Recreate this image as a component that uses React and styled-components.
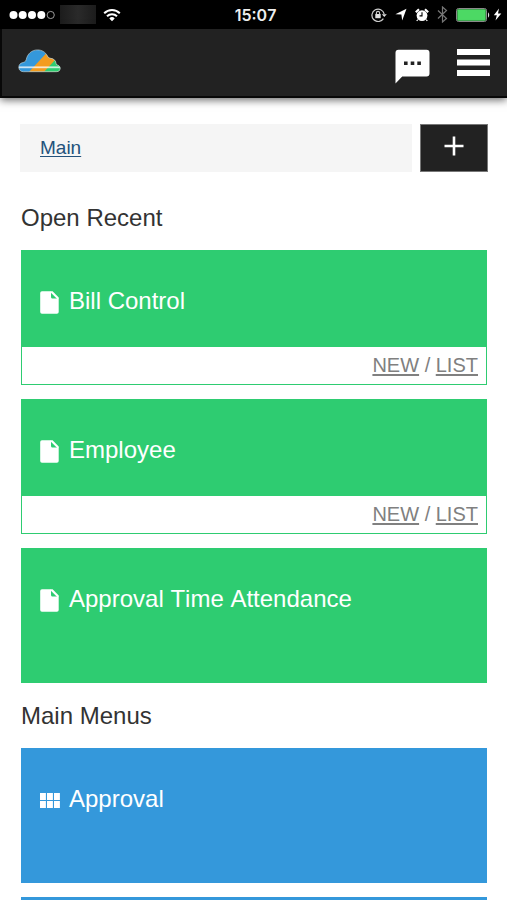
import React from 'react';
import styled, { createGlobalStyle } from 'styled-components';

const GlobalStyle = createGlobalStyle`
  * {
    box-sizing: border-box;
  }
  body {
    margin: 0;
    background: #ffffff;
    font-family: 'Liberation Sans', Arial, sans-serif;
    font-kerning: none;
  }
  svg {
    display: block;
    flex-shrink: 0;
  }
`;

const Screen = styled.div`
  height: 100vh;
  display: flex;
  flex-direction: column;
  overflow: hidden;
`;

const StatusBar = styled.div`
  flex-shrink: 0;
  display: grid;
  grid-template-columns: 1fr auto 1fr;
  align-items: center;
  height: 29px;
  padding: 0 5px 0 9px;
  background: #000000;
`;

const StatusGroup = styled.div`
  display: flex;
  align-items: center;
  justify-content: ${props => props.$end ? 'flex-end' : 'flex-start'};
  gap: ${props => props.$end ? '8px' : '5px'};
`;

const Power = styled.div`
  display: flex;
  align-items: center;
  gap: 3px;
`;

const Carrier = styled.div`
  width: 36px;
  height: 19px;
  margin-right: 2px;
  background: linear-gradient(to right, #1c1c1c, #2a2a2a 50%, #1c1c1c);
`;

const Clock = styled.time`
  font-family: Inter, sans-serif;
  font-size: 16px;
  font-weight: 600;
  line-height: 20px;
  color: #eeeeee;
`;

const Header = styled.header`
  flex-shrink: 0;
  display: flex;
  align-items: flex-start;
  justify-content: space-between;
  height: 69px;
  padding: 20px 17px 0 16px;
  background: #222222;
  border-left: 2px solid #080808;
  border-bottom: 2px solid #080808;
  box-shadow: 0 2px 8px rgba(0, 0, 0, 0.6);
`;

const HeaderActions = styled.div`
  display: flex;
  align-items: flex-start;
  gap: 27px;
`;

const IconButton = styled.button`
  padding: 0;
  border: none;
  background: none;
  cursor: pointer;
`;

const HomeLink = styled.a`
  display: block;
`;

const Content = styled.main`
  flex: 1;
  min-height: 0;
  overflow: hidden;
  padding: 26px 20px 0;
`;

const Toolbar = styled.div`
  display: flex;
  gap: 8px;
  margin-right: -1px;
`;

const Breadcrumb = styled.nav`
  flex: 1;
  height: 48px;
  padding: 0 20px;
  background: #f5f5f5;
  font-size: 19px;
  line-height: 48px;

  a {
    color: #23527c;
    text-underline-offset: 2px;
  }
`;

const AddButton = styled.button`
  display: flex;
  align-items: center;
  justify-content: center;
  width: 68px;
  height: 48px;
  padding: 0 0 4px;
  background: #222222;
  border: 1px solid #777777;
  cursor: pointer;
`;

const Section = styled.section`
  padding: 0 0 0 1px;
`;

const SectionTitle = styled.h2`
  margin: 0;
  padding: ${props => props.$first ? '32px 0 18px' : '19px 0 18px'};
  font-size: 24px;
  font-weight: normal;
  line-height: 28px;
  color: #333333;
`;

const CardList = styled.div`
  display: flex;
  flex-direction: column;
  gap: 14px;
`;

const Card = styled.article`
  display: flex;
  flex-direction: column;
  height: 135px;
  background: ${props => props.$color};
`;

const CardTitle = styled.a`
  flex: 1;
  display: flex;
  align-items: flex-start;
  gap: 10px;
  padding: 37px 19px 0;
  font-size: 24px;
  line-height: 28px;
  color: #ffffff;
  text-decoration: none;
`;

const CardIcon = styled.span`
  display: flex;
  align-items: center;
  width: 19px;
  height: 30px;
`;

const CardFooter = styled.div`
  height: 39px;
  padding: 0 8px;
  background: #ffffff;
  border: 1px solid #2ecc71;
  text-align: right;
  font-size: 20px;
  line-height: 36px;
  color: #808080;

  a {
    color: #808080;
    text-underline-offset: 2px;
  }
`;

const SignalDots = () => (
  <svg width="46" height="10" viewBox="0 0 46 10" fill="#fff">
    <circle cx="4.5" cy="5" r="4" />
    <circle cx="13.7" cy="5" r="4" />
    <circle cx="23" cy="5" r="4" />
    <circle cx="32.3" cy="5" r="4" />
    <circle cx="41.7" cy="5" r="3.6" fill="none" stroke="#aaa" strokeWidth="0.9" />
  </svg>
);

const WifiIcon = () => (
  <svg width="18" height="14" viewBox="0 0 18 14" fill="none" stroke="#fff" strokeWidth="2">
    <path d="M1.2 5.2a11 11 0 0 1 15.6 0" />
    <path d="M4 8.2a7.1 7.1 0 0 1 10 0" />
    <path d="M9 13.2l-2.7-2.8a3.9 3.9 0 0 1 5.4 0z" fill="#fff" stroke="none" />
  </svg>
);

const RotationLockIcon = () => (
  <svg width="16" height="14" viewBox="0 0 16 14" fill="none" stroke="#ccc">
    <path d="M12.4 10.6A6.2 6.2 0 1 1 13.2 6" strokeWidth="1.2" />
    <path d="M10.8 6.2h5L13.3 9z" fill="#ddd" stroke="none" />
    <rect x="4.3" y="6" width="5.4" height="4.2" fill="#ddd" stroke="none" />
    <path d="M5.4 6.2V5a1.6 1.6 0 0 1 3.2 0v1.2" strokeWidth="1.1" />
  </svg>
);

const LocationIcon = () => (
  <svg width="12" height="13" viewBox="0 0 12 13" fill="#fff">
    <path d="M11.5.8L7.2 12.4 6.4 6.6.4 6.2z" />
  </svg>
);

const AlarmIcon = () => (
  <svg width="14" height="14" viewBox="0 0 14 14">
    <path d="M.8 4.2L4 1.2M13.2 4.2L10 1.2" stroke="#fff" strokeWidth="2.2" />
    <circle cx="7" cy="7.6" r="5.4" fill="#fff" />
    <path d="M2.8 11.6l-1.1 1.4M11.2 11.6l1.1 1.4" stroke="#fff" strokeWidth="1.2" />
    <path d="M7 4.3v3.6H4.5" fill="none" stroke="#000" strokeWidth="1.1" />
  </svg>
);

const BluetoothIcon = () => (
  <svg width="11" height="17" viewBox="0 0 11 17" fill="none" stroke="#777" strokeWidth="1.2">
    <path d="M1 4.5l8.5 8-4 3.5V1l4 3.5-8.5 8" />
  </svg>
);

const BatteryIcon = () => (
  <svg width="34" height="14" viewBox="0 0 34 14">
    <rect x=".5" y=".5" width="30" height="13" rx="2" fill="#111" stroke="#8a8a8a" />
    <rect x="1.3" y="1.3" width="28.4" height="11.4" rx="1" fill="#4cd964" />
    <path d="M32 4.5c1.6.4 1.6 4.6 0 5z" fill="#ddd" />
  </svg>
);

const BoltIcon = () => (
  <svg width="9" height="13" viewBox="0 0 9 13" fill="#fff">
    <path d="M6 .5L.8 7.2h3L2.5 12.6 8.3 5.6H5z" />
  </svg>
);

const CloudLogo = () => (
  <svg width="43" height="24" viewBox="0 0 43 24">
    <defs>
      <clipPath id="cloud">
        <path d="M5.5 22.7C2.8 22.7.8 20.9.8 18.4c0-2.7 1.6-4.3 4-4.8 1.2-.3 3-1 3.4-2.8C9.3 4.8 13.8.9 19.5.9c4.4 0 8 2.2 10 6.2.7 1.4 1.8 2 3.2 2.2 3.3.4 5.2 2.6 5.4 5.2.1 1 .6 1.3 1.5 1.6 1.6.5 2.6 1.7 2.6 3.2 0 2-1.5 3.4-3.8 3.4z" />
      </clipPath>
    </defs>
    <g clipPath="url(#cloud)">
      <rect width="43" height="24" fill="#3498db" />
      <path d="M10 24L28.5 4l14.5 4v16z" fill="#f39c1f" />
      <path d="M25 24L38 10l5 3v11z" fill="#2ecc71" />
      <rect y="17.4" width="43" height="1.8" fill="#fff" fillOpacity=".75" />
    </g>
    <path d="M5.5 22.7C2.8 22.7.8 20.9.8 18.4c0-2.7 1.6-4.3 4-4.8 1.2-.3 3-1 3.4-2.8C9.3 4.8 13.8.9 19.5.9c4.4 0 8 2.2 10 6.2.7 1.4 1.8 2 3.2 2.2 3.3.4 5.2 2.6 5.4 5.2.1 1 .6 1.3 1.5 1.6 1.6.5 2.6 1.7 2.6 3.2 0 2-1.5 3.4-3.8 3.4z" fill="none" stroke="#c5d5d8" strokeOpacity=".7" strokeWidth=".9" />
  </svg>
);

const ChatIcon = () => (
  <svg width="35" height="35" viewBox="0 0 35 35">
    <path d="M3.5.8h28a3 3 0 0 1 3 3v20.7a3 3 0 0 1-3 3H7.2L.5 34.4V3.8a3 3 0 0 1 3-3z" fill="#fff" />
    <path d="M9 12.5h3.6v3.6H9zM15.7 12.5h3.6v3.6h-3.6zM22.3 12.5h3.6v3.6h-3.6z" fill="#222" />
  </svg>
);

const MenuIcon = () => (
  <svg width="33" height="28" viewBox="0 0 33 28" fill="#fff">
    <path d="M0 0h33v6H0zM0 10.5h33v6H0zM0 21h33v6H0z" />
  </svg>
);

const PlusIcon = () => (
  <svg width="20" height="20" viewBox="0 0 20 20" stroke="#fff" strokeWidth="2.6">
    <path d="M10 .5v19M.5 10h19" />
  </svg>
);

const FileIcon = () => (
  <svg width="19" height="23" viewBox="0 0 19 23" fill="#fff">
    <path d="M2 .3h9v5.6c0 .9.6 1.5 1.5 1.5h6.2V21a1.8 1.8 0 0 1-1.8 1.8H2A1.8 1.8 0 0 1 .2 21V2.1A1.8 1.8 0 0 1 2 .3z" />
    <path d="M10.5.3h2.1l6.1 6.3v1.3h-1.5l-6-6z" />
  </svg>
);

const ModuleIcon = () => (
  <svg width="20" height="15" viewBox="0 0 20 15" fill="#fff">
    <path d="M0 0h5.9v6.9H0zM7 0h5.9v6.9H7zM14 0h5.9v6.9H14zM0 8h5.9v6.9H0zM7 8h5.9v6.9H7zM14 8h5.9v6.9H14z" />
  </svg>
);

const recent = [
  { name: 'Bill Control', actions: true },
  { name: 'Employee', actions: true },
  { name: 'Approval Time Attendance', actions: false },
];

const MenuCard = ({ name, color, icon, actions }) => (
  <Card $color={color}>
    {name && (
      <CardTitle href="#">
        <CardIcon>{icon}</CardIcon>
        {name}
      </CardTitle>
    )}
    {actions && (
      <CardFooter>
        <a href="#">NEW</a> / <a href="#">LIST</a>
      </CardFooter>
    )}
  </Card>
);

const App = () => {
  return (
    <Screen>
      <GlobalStyle />
      <StatusBar>
        <StatusGroup>
          <SignalDots />
          <Carrier />
          <WifiIcon />
        </StatusGroup>
        <Clock>15:07</Clock>
        <StatusGroup $end>
          <RotationLockIcon />
          <LocationIcon />
          <AlarmIcon />
          <BluetoothIcon />
          <Power>
            <BatteryIcon />
            <BoltIcon />
          </Power>
        </StatusGroup>
      </StatusBar>

      <Header>
        <HomeLink href="#" aria-label="Home"><CloudLogo /></HomeLink>
        <HeaderActions>
          <IconButton aria-label="Messages"><ChatIcon /></IconButton>
          <IconButton aria-label="Menu"><MenuIcon /></IconButton>
        </HeaderActions>
      </Header>

      <Content>
        <Toolbar>
          <Breadcrumb><a href="#">Main</a></Breadcrumb>
          <AddButton aria-label="Add"><PlusIcon /></AddButton>
        </Toolbar>

        <Section>
          <SectionTitle $first>Open Recent</SectionTitle>
          <CardList>
            {recent.map(item => (
              <MenuCard key={item.name} color="#2ecc71" icon={<FileIcon />} {...item} />
            ))}
          </CardList>
        </Section>

        <Section>
          <SectionTitle>Main Menus</SectionTitle>
          <CardList>
            <MenuCard name="Approval" color="#3498db" icon={<ModuleIcon />} />
            <MenuCard color="#3498db" />
          </CardList>
        </Section>
      </Content>
    </Screen>
  );
};

export default App;
